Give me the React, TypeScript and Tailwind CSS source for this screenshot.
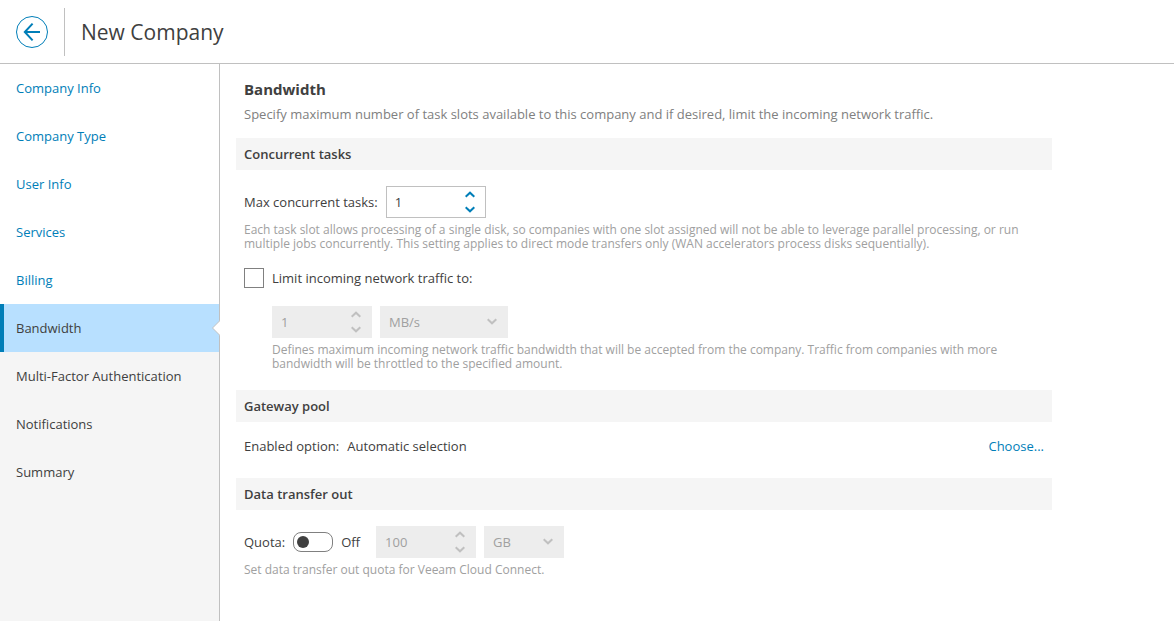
import { useState } from "react";
import type { ReactNode } from "react";

const steps = [
  { label: "Company Info", state: "done" },
  { label: "Company Type", state: "done" },
  { label: "User Info", state: "done" },
  { label: "Services", state: "done" },
  { label: "Billing", state: "done" },
  { label: "Bandwidth", state: "current" },
  { label: "Multi-Factor Authentication", state: "next" },
  { label: "Notifications", state: "next" },
  { label: "Summary", state: "next" },
];

const stepStyles: Record<string, string> = {
  done: "bg-white text-[#007eb8]",
  current: "bg-[#b8e0ff] text-[#404040] border-l-4 border-[#007eb8] pl-3",
  next: "text-[#404040]",
};

function Chevron({ up = false }: { up?: boolean }) {
  return (
    <svg width="10" height="7" viewBox="0 0 10 7" fill="none" stroke="currentColor" strokeWidth="2" aria-hidden="true">
      <path d={up ? "M0.7 5.8 5 1.7 9.3 5.8" : "M0.7 1.2 5 5.3 9.3 1.2"} />
    </svg>
  );
}

function NumberField({ id, initial, label, disabled = false }: { id: string; initial: number; label?: string; disabled?: boolean }) {
  const [value, setValue] = useState(String(initial));
  const change = (by: number) => setValue(String(Math.max(1, Number(value) + by)));
  return (
    <div
      className={`flex h-8 w-[100px] border ${
        disabled ? "border-[#ededed] bg-[#ededed] text-[#a0a0a0]" : "border-[#c0c0c0] bg-white text-[#404040]"
      }`}
    >
      <input
        id={id}
        type="text"
        inputMode="numeric"
        aria-label={label}
        value={value}
        disabled={disabled}
        onChange={(e) => setValue(e.target.value.replace(/\D/g, ""))}
        className="w-0 min-w-0 flex-1 bg-transparent px-2 outline-none"
      />
      <div className={`flex w-[30px] flex-col ${disabled ? "text-[#c0c0c0]" : "text-[#007eb8]"}`}>
        <button type="button" aria-label="Increase" disabled={disabled} onClick={() => change(1)} className="flex flex-1 items-center justify-center">
          <Chevron up />
        </button>
        <button type="button" aria-label="Decrease" disabled={disabled} onClick={() => change(-1)} className="flex flex-1 items-center justify-center">
          <Chevron />
        </button>
      </div>
    </div>
  );
}

function UnitSelect({ label, options, width }: { label: string; options: string[]; width: string }) {
  return (
    <div className={`relative h-8 ${width}`}>
      <select
        aria-label={label}
        disabled
        className="h-full w-full appearance-none bg-[#ededed] pr-6 pl-[9px] text-[#a0a0a0] opacity-100"
      >
        {options.map((o) => (
          <option key={o}>{o}</option>
        ))}
      </select>
      <span className="pointer-events-none absolute top-0 right-[11px] bottom-px flex items-center text-[#c0c0c0]">
        <Chevron />
      </span>
    </div>
  );
}

function SectionTitle({ children }: { children: ReactNode }) {
  return <h3 className="flex h-8 items-center bg-[#f5f5f5] px-2 font-semibold">{children}</h3>;
}

function Hint({ children }: { children: ReactNode }) {
  return <p className="mt-[5px] text-[12px] leading-[14px] text-[#a0a0a0]">{children}</p>;
}

export default function App() {
  const [limited, setLimited] = useState(false);
  const [quota, setQuota] = useState(false);

  return (
    <div className="flex min-h-screen flex-col bg-white font-['Open_Sans',sans-serif] text-[13px] leading-5 text-[#404040]">
      <header className="flex h-16 items-center gap-4 border-b border-[#c0c0c0] px-4">
        <button type="button" aria-label="Back" className="text-[#007eb8]">
          <svg width="32" height="32" viewBox="0 0 32 32" fill="none" stroke="currentColor">
            <circle cx="16" cy="16" r="15.5" />
            <path d="M24 16H9M16.6 7.6 8.8 16l7.8 8.4" strokeWidth="2" />
          </svg>
        </button>
        <div className="h-12 w-px bg-[#c0c0c0]" />
        <h1 className="text-[21px] leading-8">New Company</h1>
      </header>

      <div className="flex flex-1">
        <nav aria-label="Steps" className="w-[220px] shrink-0 border-r border-[#c0c0c0] bg-[#f5f5f5]">
          <ul>
            {steps.map(({ label, state }) => (
              <li key={label} className="relative">
                <a
                  href="#"
                  aria-current={state === "current" ? "step" : undefined}
                  className={`flex h-12 items-center px-4 ${stepStyles[state]}`}
                >
                  {label}
                </a>
                {state === "current" && (
                  <svg className="absolute top-4 -right-px" width="8" height="16" viewBox="0 0 8 16" aria-hidden="true">
                    <path d="M8 0.5 0.5 8 8 15.5Z" fill="#fff" />
                    <path d="M7.5 1 0.5 8l7 7" fill="none" stroke="#c0c0c0" />
                  </svg>
                )}
              </li>
            ))}
          </ul>
        </nav>

        <main className="min-w-0 flex-1 px-4 pt-4 pb-8">
          <div className="max-w-[816px]">
            <div className="px-2 pb-[14px]">
              <h2 className="text-[15px] leading-[18px] font-bold">Bandwidth</h2>
              <p className="mt-1.5 text-[#808080]">
                Specify maximum number of task slots available to this company and if desired, limit the incoming network traffic.
              </p>
            </div>

            <section>
              <SectionTitle>Concurrent tasks</SectionTitle>
              <div className="px-2 pt-4 pb-[19px]">
                <div className="flex items-center gap-2">
                  <label htmlFor="max-tasks">Max concurrent tasks:</label>
                  <NumberField id="max-tasks" initial={1} />
                </div>
                <Hint>
                  Each task slot allows processing of a single disk, so companies with one slot assigned will not be able to leverage
                  parallel processing, or run multiple jobs concurrently. This setting applies to direct mode transfers only (WAN
                  accelerators process disks sequentially).
                </Hint>
                <div className="mt-[17px] flex items-center gap-2">
                  <input
                    id="limit"
                    type="checkbox"
                    checked={limited}
                    onChange={(e) => setLimited(e.target.checked)}
                    className="size-5 appearance-none border border-[#808080] bg-white checked:bg-[#007eb8]"
                  />
                  <label htmlFor="limit">Limit incoming network traffic to:</label>
                </div>
                <div className="mt-[18px] pl-7">
                  <div className="flex gap-2">
                    <NumberField id="limit-value" label="Traffic limit" initial={1} disabled={!limited} />
                    <UnitSelect label="Traffic unit" options={["MB/s", "KB/s"]} width="w-32" />
                  </div>
                  <Hint>
                    Defines maximum incoming network traffic bandwidth that will be accepted from the company. Traffic from companies
                    with more bandwidth will be throttled to the specified amount.
                  </Hint>
                </div>
              </div>
            </section>

            <section>
              <SectionTitle>Gateway pool</SectionTitle>
              <div className="flex h-14 items-center gap-2 px-2 pb-2">
                <span>Enabled option:</span>
                <span>Automatic selection</span>
                <a href="#" className="ml-auto text-[#007eb8]">
                  Choose...
                </a>
              </div>
            </section>

            <section>
              <SectionTitle>Data transfer out</SectionTitle>
              <div className="px-2 pt-4">
                <div className="flex items-center gap-2">
                  <label htmlFor="quota">Quota:</label>
                  <input
                    id="quota"
                    type="checkbox"
                    role="switch"
                    checked={quota}
                    onChange={(e) => setQuota(e.target.checked)}
                    className="flex h-5 w-10 appearance-none items-center rounded-lg border border-[#808080] bg-white px-[3px] before:size-3 before:rounded-full before:bg-[#404040] checked:justify-end"
                  />
                  <span className="mr-2">{quota ? "On" : "Off"}</span>
                  <NumberField id="quota-value" label="Quota amount" initial={100} disabled={!quota} />
                  <UnitSelect label="Quota unit" options={["GB", "TB"]} width="w-20" />
                </div>
                <Hint>Set data transfer out quota for Veeam Cloud Connect.</Hint>
              </div>
            </section>
          </div>
        </main>
      </div>
    </div>
  );
}
